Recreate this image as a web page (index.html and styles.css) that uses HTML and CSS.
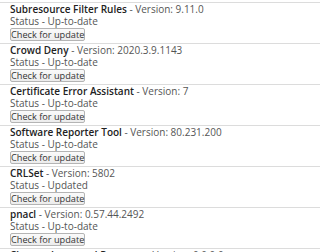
FILE: index.html
```
<!DOCTYPE html>
<html lang="en">
    <head>
        <meta charset="UTF-8">
        <title>Components</title>
        <link rel="stylesheet" href="styles.css">
    </head>
    <body>
        <div class="component-list">
            <div class="component">
                <div class="component-title"><span class="component-name">Subresource Filter Rules</span> - Version: 9.11.0</div>
                <div class="component-status">Status - Up-to-date</div>
                <button class="update-button">Check for update</button>
            </div>
            <div class="component">
                <div class="component-title"><span class="component-name">Crowd Deny</span> - Version: 2020.3.9.1143</div>
                <div class="component-status">Status - Up-to-date</div>
                <button class="update-button">Check for update</button>
            </div>
            <div class="component">
                <div class="component-title"><span class="component-name">Certificate Error Assistant</span> - Version: 7</div>
                <div class="component-status">Status - Up-to-date</div>
                <button class="update-button">Check for update</button>
            </div>
            <div class="component">
                <div class="component-title"><span class="component-name">Software Reporter Tool</span> - Version: 80.231.200</div>
                <div class="component-status">Status - Up-to-date</div>
                <button class="update-button">Check for update</button>
            </div>
            <div class="component">
                <div class="component-title"><span class="component-name">CRLSet</span> - Version: 5802</div>
                <div class="component-status">Status - Updated</div>
                <button class="update-button">Check for update</button>
            </div>
            <div class="component">
                <div class="component-title"><span class="component-name">pnacl</span> - Version: 0.57.44.2492</div>
                <div class="component-status">Status - Up-to-date</div>
                <button class="update-button">Check for update</button>
            </div>
            <div class="component">
                <div class="component-title"><span class="component-name">Chrome Improved Recovery</span> - Version: 0.0.0.0</div>
                <div class="component-status">Status - Up-to-date</div>
                <button class="update-button">Check for update</button>
            </div>
        </div>
    </body>
</html>
```

FILE: styles.css
```
body{
    margin: 0;
    padding-top: 2px;
    background: #fff;
    font-family: "Open Sans", "Noto Sans", sans-serif;
    font-size: 10px;
    color: #555;
    overflow: hidden;
    height: 252px;
}

.component{
    border-top: 1px solid #dcdcdc;
    padding: 0 0 2px 10px;
}

.component-title{
    line-height: 12px;
    height: 12px;
    white-space: nowrap;
}
.component-name{
    font-weight: 600;
    color: #222;
}
.component-status{
    line-height: 12px;
    height: 12px;
}

.update-button{
    display: block;
    margin: 1px 0 0;
    height: 13px;
    width: 75px;
    padding: 0;
    border: 1px solid #b4b4b4;
    border-radius: 2px;
    background: linear-gradient(#fafafa, #ececec);
    font-family: inherit;
    font-size: 9.2px;
    line-height: 11px;
    white-space: nowrap;
    color: #333;
}
```
